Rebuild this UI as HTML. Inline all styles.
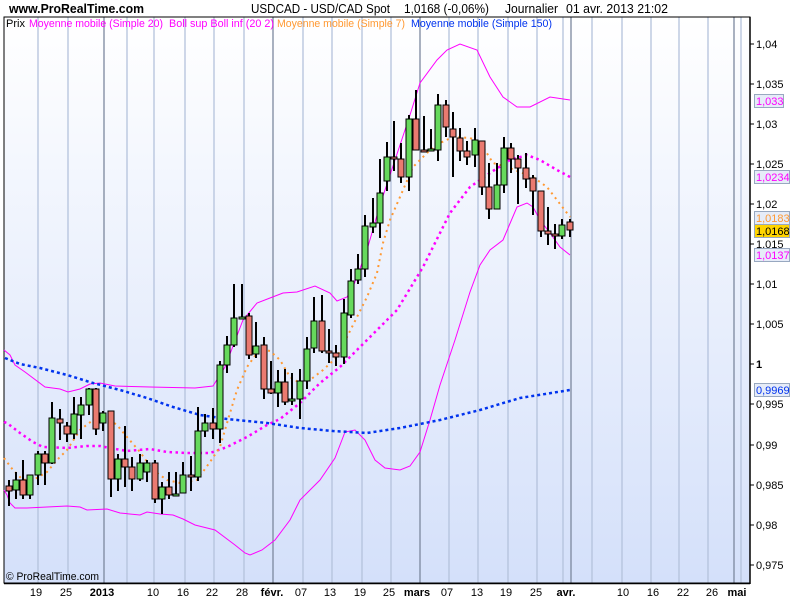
<!DOCTYPE html>
<html><head><meta charset="utf-8"><style>
html,body{margin:0;padding:0;background:#fff;width:800px;height:600px;overflow:hidden}
svg{display:block;font-family:"Liberation Sans",Arial,sans-serif}
</style></head><body>
<svg width="800" height="600" viewBox="0 0 800 600" xmlns="http://www.w3.org/2000/svg">
<defs><linearGradient id="bg" x1="0" y1="0" x2="0" y2="1"><stop offset="0" stop-color="#ffffff"/><stop offset="1" stop-color="#d4e0fa"/></linearGradient></defs>
<rect x="0" y="0" width="800" height="600" fill="#fff"/>
<rect x="4" y="17" width="746" height="566" fill="url(#bg)"/>
<g stroke="#b4c2dc" stroke-width="1.3">
<path d="M38 17V583M68 17V583M127 17V583M154 17V583M185 17V583M214 17V583M244 17V583M303 17V583M332 17V583M362 17V583M391 17V583M449 17V583M478 17V583M508 17V583M537 17V583M563 17V583M592 17V583M622 17V583M651 17V583M679 17V583M708 17V583M741 17V583"/>
</g>
<g stroke="#7c889e" stroke-width="1.3"><path d="M104 17V583M273 17V583M420 17V583M571 17V583M734 17V583"/></g>
<rect x="4" y="17" width="746" height="566" fill="none" stroke="#000" stroke-width="1"/>
<path d="M750 17V584M4 583.5H750" stroke="#000" stroke-width="1.5"/>
<polyline fill="none" stroke="#ff00ff" stroke-width="1" points="4,350 10,355 15,365 25,372 45,387 60,389 68,392 80,389 90,384 100,383 115,386 150,387 195,388 213,386 225,367 243,320 257,303 270,298 283,293 297,292 315,286 330,293 337,301 347,297 353,287 367,250 380,205 395,160 410,115 420,83 437,60 447,50 460,44 477,50 490,77 503,97 517,107 530,107 550,97 570,100"/>
<polyline fill="none" stroke="#ff00ff" stroke-width="1" points="4,490 7,495 10,503 15,508 27,508 47,507 67,506 80,507 87,510 107,509 120,513 140,515 147,512 160,514 173,515 183,519 195,525 215,530 235,545 245,553 250,555 262,550 275,540 290,520 300,500 320,480 335,458 345,432 355,430 365,440 375,460 385,468 400,470 410,466 420,452 430,420 440,385 455,340 470,292 480,265 490,250 503,240 517,207 527,203 533,207 540,220 550,233 560,247 570,255"/>
<polyline fill="none" stroke="#ff00ff" stroke-width="2.5" stroke-dasharray="2.5 3.5" points="4,422 7,423 20,433 33,442 43,447 67,448 87,446 100,446 110,448 127,451 150,449 167,452 187,453 210,453 227,447 247,437 267,425 280,419 300,403 320,383 340,367 360,347 380,327 397,310 423,267 450,213 470,187 490,173 510,160 527,155 540,160 557,170 570,177"/>
<polyline fill="none" stroke="#ff9933" stroke-width="2" stroke-dasharray="2 4" points="4,458 13,470 23,480 37,478 47,472 57,460 67,450 80,430 93,420 103,415 117,425 127,437 140,452 153,470 167,480 180,483 197,480 210,462 220,447 230,413 237,390 247,367 260,349 270,351 280,360 290,377 300,383 310,380 323,370 337,357 347,337 357,317 367,297 377,273 383,243 390,220 403,190 413,167 427,153 440,143 453,137 470,138 480,142 493,163 507,167 520,172 533,177 547,187 557,200 570,217"/>
<polyline fill="none" stroke="#0033ee" stroke-width="2.5" stroke-dasharray="3 3" points="5,358 20,364 40,368 67,375 93,383 120,390 147,398 173,407 200,415 227,419 267,423 300,428 333,431 367,433 400,428 440,420 480,410 520,398 570,390"/>
<path stroke="#000" stroke-width="2" fill="none" d="M9 480V506M16 472V499M23 460V499M30 475V499M38 451V485M45 451V485M52 402V464M60 409V440M67 422V442M74 397V439M81 397V439M89 388V415M96 388V435M103 411V431M111 411V497M118 454V491M125 426V487M132 457V491M140 454V481M147 460V482M155 460V503M162 482V514M169 472V499M176 472V496M183 462V493M191 456V491M198 407V481M205 414V437M213 408V439M220 361V443M227 336V373M234 284V347M242 284V319M249 313V359M256 322V358M264 337V399M271 361V394M278 370V407M285 369V405M292 373V405M300 369V419M307 337V389M314 297V353M322 295V353M329 329V363M336 345V366M344 299V364M351 269V318M358 254V284M365 215V277M373 198V233M380 159V238M387 142V191M394 121V171M401 143V183M409 115V191M416 90V150M424 116V151M431 129V151M438 94V161M446 100V137M453 112V177M460 128V161M467 141V165M475 128V167M482 141V195M489 163V219M497 163V209M504 137V193M511 143V173M518 155V204M526 153V188M533 175V215M541 191V237M548 207V245M555 224V249M562 219V239M570 219V237"/>
<g stroke="#000" stroke-width="1" fill="#66d95c">
<rect x="13" y="480" width="6" height="10"/><rect x="27" y="475" width="6" height="20"/><rect x="35" y="454" width="6" height="21"/><rect x="49" y="418" width="6" height="45"/><rect x="71" y="414" width="6" height="20"/><rect x="78" y="405" width="6" height="10"/><rect x="86" y="389" width="6" height="16"/><rect x="100" y="413" width="6" height="10"/><rect x="115" y="459" width="6" height="20"/><rect x="137" y="463" width="6" height="16"/><rect x="144" y="463" width="6" height="9"/><rect x="159" y="487" width="6" height="12"/><rect x="173" y="494" width="6" height="2"/><rect x="180" y="475" width="6" height="18"/><rect x="195" y="431" width="6" height="46"/><rect x="202" y="423" width="6" height="8"/><rect x="217" y="365" width="6" height="64"/><rect x="224" y="345" width="6" height="20"/><rect x="231" y="318" width="6" height="27"/><rect x="239" y="317" width="6" height="2"/><rect x="253" y="346" width="6" height="8"/><rect x="275" y="382" width="6" height="11"/><rect x="289" y="399" width="6" height="2"/><rect x="297" y="381" width="6" height="18"/><rect x="304" y="349" width="6" height="32"/><rect x="311" y="321" width="6" height="27"/><rect x="341" y="313" width="6" height="44"/><rect x="348" y="281" width="6" height="34"/><rect x="355" y="269" width="6" height="11"/><rect x="362" y="226" width="6" height="43"/><rect x="370" y="223" width="6" height="4"/><rect x="377" y="193" width="6" height="30"/><rect x="384" y="157" width="6" height="24"/><rect x="406" y="119" width="6" height="58"/><rect x="428" y="149" width="6" height="2"/><rect x="435" y="105" width="6" height="45"/><rect x="472" y="140" width="6" height="15"/><rect x="494" y="185" width="6" height="24"/><rect x="501" y="148" width="6" height="37"/><rect x="559" y="225" width="6" height="11"/>
</g>
<g stroke="#000" stroke-width="1" fill="#ea7a70">
<rect x="6" y="486" width="6" height="5"/><rect x="20" y="480" width="6" height="15"/><rect x="42" y="454" width="6" height="9"/><rect x="57" y="419" width="6" height="4"/><rect x="64" y="426" width="6" height="8"/><rect x="93" y="389" width="6" height="40"/><rect x="108" y="411" width="6" height="68"/><rect x="122" y="459" width="6" height="8"/><rect x="129" y="467" width="6" height="12"/><rect x="152" y="463" width="6" height="36"/><rect x="166" y="487" width="6" height="8"/><rect x="188" y="475" width="6" height="2"/><rect x="210" y="423" width="6" height="6"/><rect x="246" y="316" width="6" height="39"/><rect x="261" y="345" width="6" height="44"/><rect x="268" y="389" width="6" height="4"/><rect x="282" y="382" width="6" height="20"/><rect x="319" y="321" width="6" height="30"/><rect x="326" y="351" width="6" height="2"/><rect x="333" y="353" width="6" height="4"/><rect x="391" y="157" width="6" height="2"/><rect x="398" y="159" width="6" height="18"/><rect x="413" y="119" width="6" height="31"/><rect x="421" y="150" width="6" height="2"/><rect x="443" y="105" width="6" height="22"/><rect x="450" y="129" width="6" height="8"/><rect x="457" y="138" width="6" height="13"/><rect x="464" y="151" width="6" height="6"/><rect x="479" y="141" width="6" height="46"/><rect x="486" y="187" width="6" height="22"/><rect x="508" y="148" width="6" height="11"/><rect x="515" y="159" width="6" height="9"/><rect x="523" y="168" width="6" height="11"/><rect x="530" y="178" width="6" height="13"/><rect x="538" y="191" width="6" height="40"/><rect x="545" y="231" width="6" height="3"/><rect x="552" y="234" width="6" height="2"/><rect x="567" y="222" width="6" height="8"/>
</g>
<text x="9" y="13" font-size="13" font-weight="bold" textLength="135" lengthAdjust="spacingAndGlyphs">www.ProRealTime.com</text>
<g font-size="13">
<text x="251" y="13" textLength="139" lengthAdjust="spacingAndGlyphs">USDCAD - USD/CAD Spot</text>
<text x="404" y="13" textLength="85" lengthAdjust="spacingAndGlyphs">1,0168 (-0,06%)</text>
<text x="505" y="13" textLength="53" lengthAdjust="spacingAndGlyphs">Journalier</text>
<text x="566" y="13" textLength="102" lengthAdjust="spacingAndGlyphs">01 avr. 2013 21:02</text>
</g>
<g font-size="11">
<text x="6" y="27" textLength="19" lengthAdjust="spacingAndGlyphs">Prix</text>
<text x="29" y="27" fill="#ff00ff" textLength="134" lengthAdjust="spacingAndGlyphs">Moyenne mobile (Simple 20)</text>
<text x="169" y="27" fill="#ff00ff" textLength="105" lengthAdjust="spacingAndGlyphs">Boll sup Boll inf (20 2)</text>
<text x="277" y="27" fill="#ff9933" textLength="128" lengthAdjust="spacingAndGlyphs">Moyenne mobile (Simple 7)</text>
<text x="411" y="27" fill="#0033ee" textLength="141" lengthAdjust="spacingAndGlyphs">Moyenne mobile (Simple 150)</text>
<text x="6" y="580" textLength="93" lengthAdjust="spacingAndGlyphs">© ProRealTime.com</text>
</g>
<path stroke="#000" stroke-width="1" d="M750 44H754M750 84H754M750 124H754M750 164H754M750 204H754M750 244H754M750 284H754M750 324H754M750 364H754M750 404H754M750 445H754M750 485H754M750 525H754M750 565H754"/>
<g font-size="11">
<text x="756" y="48">1,04</text><text x="756" y="88">1,035</text><text x="756" y="128">1,03</text><text x="756" y="168">1,025</text><text x="756" y="208">1,02</text><text x="756" y="248">1,015</text><text x="756" y="288">1,01</text><text x="756" y="328">1,005</text><text x="756" y="368" font-weight="bold">1</text><text x="756" y="408">0,995</text><text x="756" y="449">0,99</text><text x="756" y="489">0,985</text><text x="756" y="529">0,98</text><text x="756" y="569">0,975</text>
</g>
<g font-size="11" stroke-width="1">
<rect x="754.5" y="94.5" width="29" height="13" fill="#e6ecf8" stroke="#98a8c0"/><text x="756" y="105" fill="#ff00ff">1,033</text>
<rect x="754.5" y="170.5" width="35" height="13" fill="#e6ecf8" stroke="#98a8c0"/><text x="756" y="181" fill="#ff00ff">1,0234</text>
<rect x="754.5" y="211.5" width="35" height="13" fill="#e6ecf8" stroke="#98a8c0"/><text x="756" y="222" fill="#ff9933">1,0183</text>
<rect x="754.5" y="224.5" width="35" height="13" fill="#ffd400" stroke="#98a8c0"/><text x="756" y="235" fill="#000">1,0168</text>
<rect x="754.5" y="248.5" width="35" height="13" fill="#e6ecf8" stroke="#98a8c0"/><text x="756" y="259" fill="#ff00ff">1,0137</text>
<rect x="754.5" y="383.5" width="35" height="13" fill="#e6ecf8" stroke="#98a8c0"/><text x="756" y="394" fill="#0033ee">0,9969</text>
</g>
<g font-size="11" text-anchor="middle">
<text x="36" y="596">19</text><text x="66" y="596">25</text><text x="102" y="596" font-weight="bold">2013</text><text x="153" y="596">10</text><text x="183" y="596">16</text><text x="212" y="596">22</text><text x="242" y="596">28</text><text x="272" y="596" font-weight="bold">févr.</text><text x="301" y="596">07</text><text x="330" y="596">13</text><text x="360" y="596">19</text><text x="389" y="596">25</text><text x="417" y="596" font-weight="bold">mars</text><text x="447" y="596">07</text><text x="477" y="596">13</text><text x="506" y="596">19</text><text x="536" y="596">25</text><text x="566" y="596" font-weight="bold">avr.</text><text x="623" y="596">10</text><text x="653" y="596">16</text><text x="683" y="596">22</text><text x="712" y="596">26</text><text x="737" y="596" font-weight="bold">mai</text>
</g>
</svg>
</body></html>
